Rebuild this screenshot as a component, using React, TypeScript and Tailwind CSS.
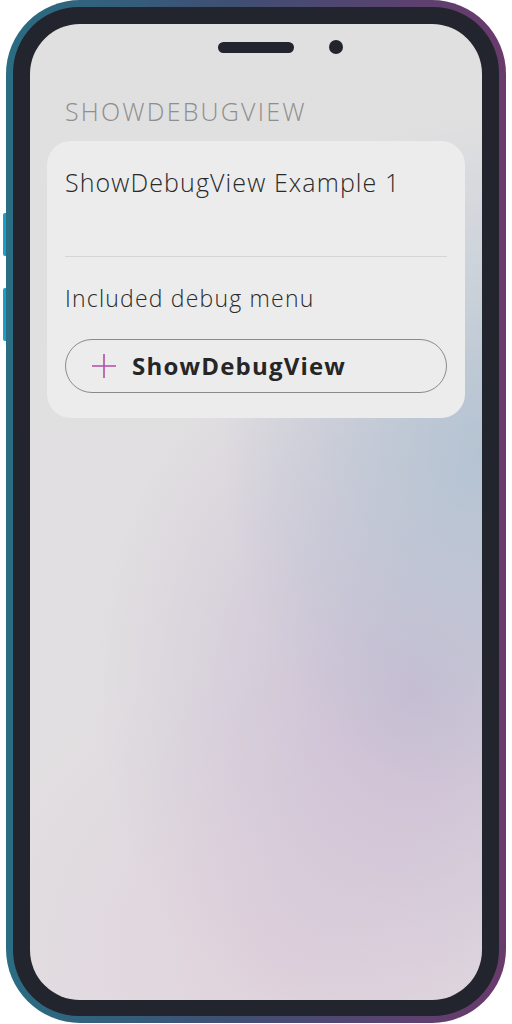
export default function App() {
  return (
    <div className="w-[512px] h-[1024px] bg-white relative" style={{ fontFamily: "'Open Sans', 'Noto Sans', sans-serif" }}>
      {/* side buttons */}
      <div className="absolute left-[3px] top-[213px] w-[5px] h-[43px] rounded-l-[2px] bg-[#1b9fc6]" />
      <div className="absolute left-[3px] top-[288px] w-[5px] h-[53px] rounded-l-[2px] bg-[#1b9fc6]" />

      <div className="relative ml-[6px] w-[500px] h-[1023px] rounded-[74px] p-[7px] bg-[linear-gradient(90deg,#2a6d82_0%,#3f4f74_45%,#6a3a6c_100%)]">
        <div className="w-full h-full rounded-[66px] bg-[#22252d] pt-[17px] pb-[16px] pl-[17px] pr-[17px]">
          <div className="w-full h-full rounded-[50px] overflow-hidden flex flex-col bg-[radial-gradient(ellipse_260px_340px_at_100%_44%,#b4c3d2_0%,rgba(180,195,210,0)_100%),radial-gradient(ellipse_320px_380px_at_85%_68%,#cabcd3_0%,rgba(202,188,211,0)_100%),radial-gradient(ellipse_320px_300px_at_55%_95%,#e0d2dc_0%,rgba(224,210,220,0)_100%),linear-gradient(180deg,#e0e0e0_0%,#e1dfe1_50%,#e2dfe2_100%)]">
            {/* speaker + camera */}
            <div className="flex items-center gap-[35px] mt-[16px] h-[14px] pl-[188px]">
              <div className="w-[76px] h-[11px] rounded-full bg-[#22252d]" />
              <div className="w-[14px] h-[14px] rounded-full bg-[#22252d]" />
            </div>

            <h1 className="mt-[42px] pl-[35px] text-[25px] leading-[30px] font-light tracking-[2.2px] text-[#8e8e8e]">
              SHOWDEBUGVIEW
            </h1>

            <div className="mx-[17px] mt-[15px] rounded-[24px] bg-[#ececec] px-[18px] pt-[26px] pb-[25px]">
              <p className="text-[25px] leading-[30px] font-light tracking-[1.1px] text-[#2a2a2a]">ShowDebugView Example 1</p>
              <div className="mt-[59px] h-px bg-[#d6d6d6]" />
              <p className="mt-[26px] text-[23px] leading-[30px] font-light tracking-[1.2px] text-[#2a2a2a]">Included debug menu</p>
              <button className="mt-[26px] w-full h-[54px] rounded-full border border-[#8a8a8a] flex items-center gap-[15px] pl-[25px]">
                <svg width="26" height="26" viewBox="0 0 26 26" className="text-[#b24ea6]">
                  <path d="M1 13H25M13 1V25" stroke="currentColor" strokeWidth="1.6" />
                </svg>
                <span className="text-[24px] font-bold tracking-[1.2px] text-[#262626]">ShowDebugView</span>
              </button>
            </div>
          </div>
        </div>
      </div>
    </div>
  );
}
